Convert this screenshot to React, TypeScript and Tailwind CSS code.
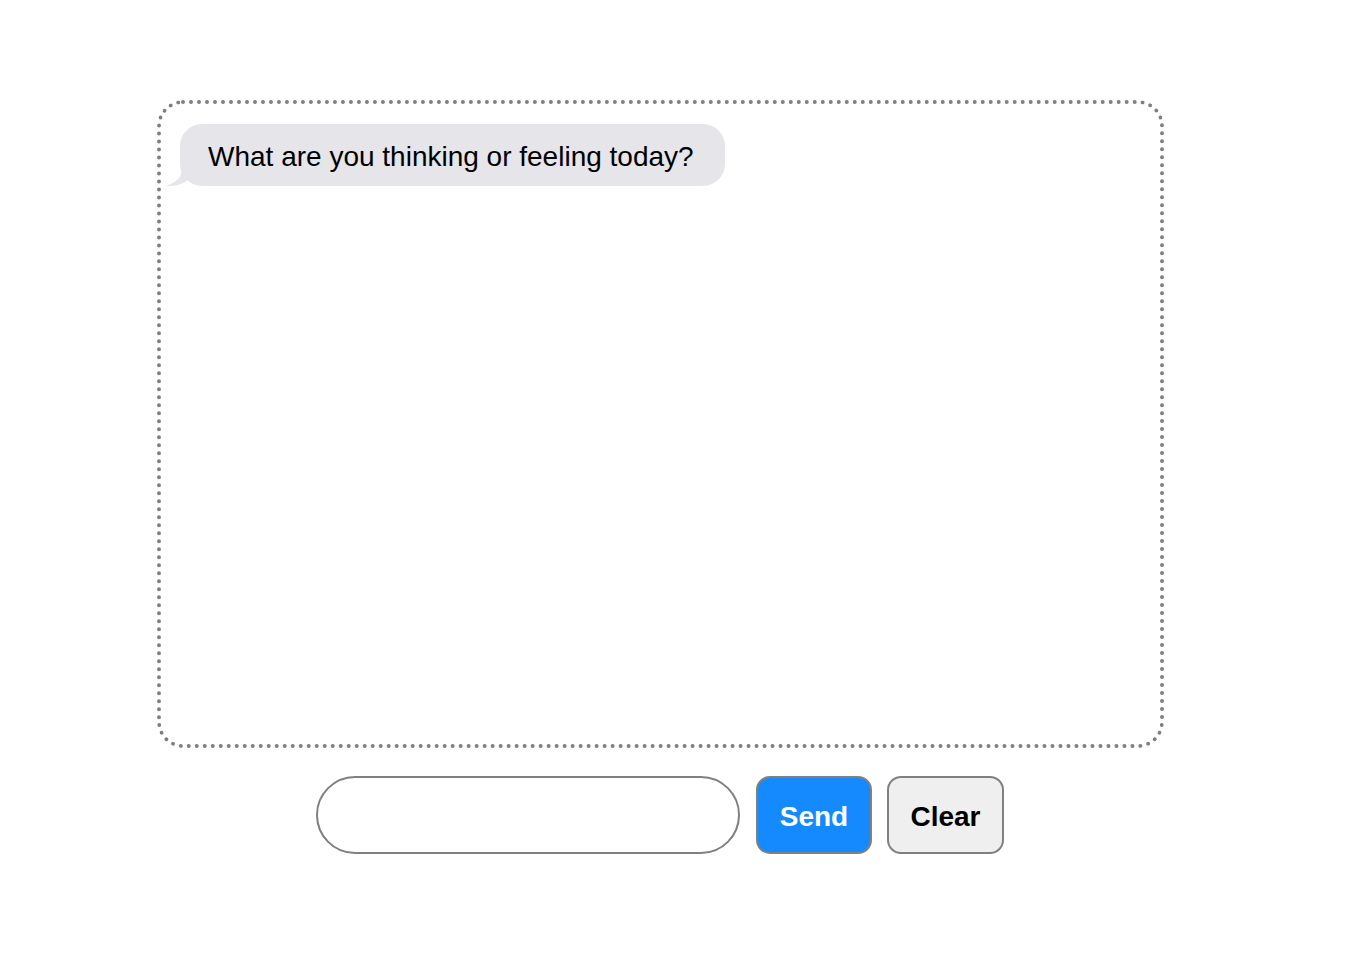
import React, { useState } from 'react';

export default function App() {
  const [text, setText] = useState('');

  return (
    <div className="min-h-screen bg-white pt-[100px] font-['Liberation_Sans',Arial,sans-serif]">
      <div className="ml-[157px] w-[1007px]">
        {/* Chat window */}
        <div className="h-[648px] rounded-[26px] border-[4px] border-dotted border-[#7f7f7f] px-[19px] pt-[20px]">
          <div className="relative inline-block rounded-[22px] bg-[#e5e5ea] pb-[13px] pl-7 pr-[31px] pt-[17px] text-[28px] leading-[32px] text-black">
            <svg
              className="absolute bottom-0 left-[-15px]"
              width="22"
              height="18"
              viewBox="0 0 22 18"
            >
              <path d="M17 0 C17 9 12 15 0 18 C9 18.5 15 17 22 13 L22 0 Z" fill="#e5e5ea" />
            </svg>
            What are you thinking or feeling today?
          </div>
        </div>

        {/* Input row */}
        <div className="mt-[28px] flex pl-[159px]">
          <input
            value={text}
            onChange={(e) => setText(e.target.value)}
            className="h-[78px] w-[424px] rounded-full border-2 border-[#808080] px-6 text-[28px] outline-none"
          />
          <button className="ml-4 h-[78px] w-[116px] rounded-[14px] border-2 border-[#808080] bg-[#158aff] pt-1 text-[28px] font-bold text-white">
            Send
          </button>
          <button className="ml-[15px] h-[78px] w-[117px] rounded-[14px] border-2 border-[#808080] bg-[#efefef] pt-1 text-[28px] font-bold text-black">
            Clear
          </button>
        </div>
      </div>
    </div>
  );
}
